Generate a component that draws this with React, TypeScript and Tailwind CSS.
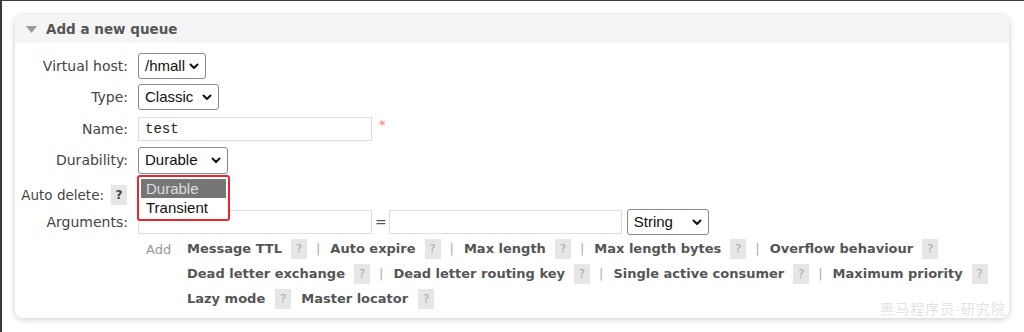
import React from "react";

const Chev = () => (
  <svg width="10" height="7" viewBox="0 0 10 7" className="shrink-0">
    <path d="M1.5 1.5 L5 5 L8.5 1.5" fill="none" stroke="#111" strokeWidth="2" strokeLinecap="round" strokeLinejoin="round" />
  </svg>
);

const Sel = ({ text, w, h = 26 }: { text: string; w: number; h?: number }) => (
  <div
    className="flex items-center justify-between rounded-[3px] border border-[#8a8a8a] bg-white pl-[6px] pr-[6px] text-[15px] text-[#111] font-['Liberation_Sans',Arial,sans-serif]"
    style={{ width: w, height: h }}
  >
    <span>{text}</span>
    <Chev />
  </div>
);

const Help = () => (
  <span className="inline-flex h-[20px] w-[16px] items-center justify-center bg-[#e6e6e6] text-[12px] font-normal text-[#aaa]">
    ?
  </span>
);

const Label = ({ children }: { children: React.ReactNode }) => (
  <div className="w-[112px] shrink-0 text-right">{children}</div>
);

const Link = ({ t, last }: { t: string; last?: boolean }) => (
  <span className="inline-flex items-center">
    <span className="font-bold text-[#555]">{t}</span>
    <span className="ml-[9px]"><Help /></span>
    {!last && <span className="ml-[9px] mr-[10px] text-[#aaa] font-normal">|</span>}
  </span>
);

export default function App() {
  return (
    <div className="w-[1024px] h-[332px] bg-white border-l-2 border-t border-[#3a3a3a] font-['DejaVu_Sans',Verdana,sans-serif] text-[14px] text-[#444] overflow-hidden">
      <div className="ml-[13px] mt-[14px] w-[994px] h-[303px] rounded-[8px] bg-white shadow-[0_1px_6px_rgba(0,0,0,0.22)] relative">
        <div className="h-[28px] rounded-t-[8px] bg-[#f5f5f5] flex items-center pl-[10px]">
          <svg width="11" height="7" viewBox="0 0 11 7" className="mr-[9px] ml-[1px]">
            <path d="M0 0 H11 L5.5 7 Z" fill="#999" />
          </svg>
          <span className="font-bold text-[13.5px] text-[#555]">Add a new queue</span>
        </div>
        <div className="pt-[10px] pl-[1px] flex flex-col">
          <div className="flex items-center h-[26px] gap-[10px]">
            <Label>Virtual host:</Label>
            <Sel text="/hmall" w={68} />
          </div>
          <div className="flex items-center h-[26px] gap-[10px] mt-[5px]">
            <Label>Type:</Label>
            <Sel text="Classic" w={81} />
          </div>
          <div className="flex items-center h-[24px] gap-[10px] mt-[7px]">
            <Label>Name:</Label>
            <div className="w-[234px] h-[24px] border border-[#ddd] flex items-center pl-[6px] text-[14px] text-[#222] font-['Liberation_Mono',monospace]">
              test
            </div>
            <span className="text-[#f77] text-[13px] -mt-[8px] -ml-[3px]">*</span>
          </div>
          <div className="flex items-center h-[27px] gap-[10px] mt-[6px]">
            <Label>Durability:</Label>
            <Sel text="Durable" w={90} h={27} />
          </div>
          <div className="flex items-center h-[24px] mt-[9px]">
            <div className="w-[88px] shrink-0 text-right text-[13.5px]">Auto delete:</div>
            <span className="ml-[7px] inline-flex h-[20px] w-[16px] items-center justify-center bg-[#e6e6e6] text-[12px] font-bold text-[#444]">?</span>
          </div>
          <div className="flex items-center h-[26px] mt-[2px]">
            <Label>Arguments:</Label>
            <div className="ml-[10px] w-[234px] h-[24px] border border-[#ddd]" />
            <span className="text-[#555] ml-[3px] mr-[2px]">=</span>
            <div className="w-[233px] h-[24px] border border-[#ddd]" />
            <div className="ml-[5px]">
              <Sel text="String" w={82} />
            </div>
          </div>
          <div className="flex mt-[4px] pl-[130px] text-[13px]">
            <span className="text-[#999] w-[41px] pt-[1px]">Add</span>
            <div className="flex flex-col gap-[5px]">
              <div className="flex items-center">
                <Link t="Message TTL" />
                <Link t="Auto expire" />
                <Link t="Max length" />
                <Link t="Max length bytes" />
                <Link t="Overflow behaviour" last />
              </div>
              <div className="flex items-center">
                <Link t="Dead letter exchange" />
                <Link t="Dead letter routing key" />
                <Link t="Single active consumer" />
                <Link t="Maximum priority" last />
              </div>
              <div className="flex items-center">
                <span className="font-bold text-[#555]">Lazy mode</span>
                <span className="ml-[10px]"><Help /></span>
                <span className="ml-[10px] font-bold text-[#555]">Master locator</span>
                <span className="ml-[10px]"><Help /></span>
              </div>
            </div>
          </div>
        </div>
        <div className="absolute left-[122px] top-[160px] w-[93px] rounded-[3px] border-2 border-[#e5282b] bg-white p-[2px] text-[15px] text-[#111] font-['Liberation_Sans',Arial,sans-serif] leading-[19px]">
          <div className="bg-[#767676] text-[#ddd] pl-[5px]">Durable</div>
          <div className="pl-[5px]">Transient</div>
        </div>
        <div className="absolute right-[3px] bottom-[-1px] text-[14px] text-[#e3e3e3] tracking-[1px] font-['Noto_Sans_CJK_SC',sans-serif]">
          黑马程序员-研究院
        </div>
      </div>
    </div>
  );
}
